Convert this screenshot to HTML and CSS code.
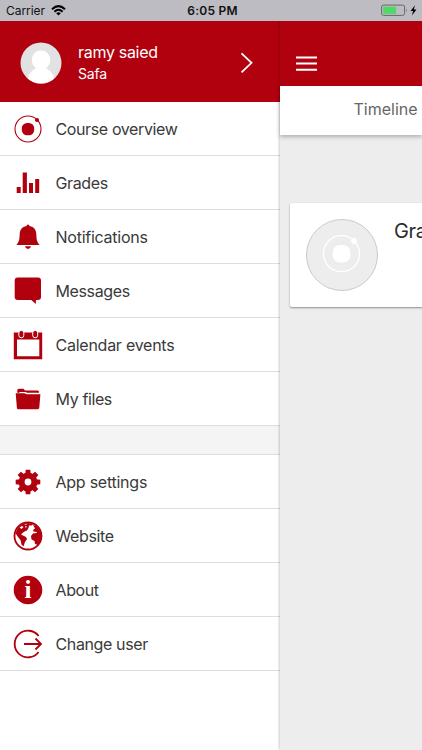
FILE: index.html
```html
<!DOCTYPE html>
<html lang="en">
<head>
<meta charset="utf-8">
<title>Menu</title>
<link rel="stylesheet" href="styles.css">
</head>
<body>
<div class="phone">
  <div class="status">
    <div class="carrier"><span>Carrier</span>
      <svg width="15" height="11" viewBox="0 0 15 11"><g fill="none" stroke="#000" stroke-width="2"><path d="M1 4.200Q7.500 -1.900 14 4.200"/><path d="M3.400 6.700Q7.500 2.800 11.600 6.700"/></g><path d="M5.200 8.300Q7.500 6.300 9.800 8.300L7.500 10.600Z"/></svg>
    </div>
    <div class="time">6:05 PM</div>
    <div class="power">
      <svg width="38" height="13" viewBox="0 0 38 13"><rect x=".6" y="1.100" width="23" height="10.300" rx="2" fill="none" stroke="#66666a" stroke-width="1"/><rect x="2.200" y="2.800" width="13" height="7" fill="#4cd964"/><path d="M25.200 4.500q1.500 1.700 0 3.500z" fill="#66666a"/><path d="M34 1.200L29.500 7H32.100L30.900 11.500L35.500 5.500H32.800Z"/></svg>
    </div>
  </div>
  <div class="content">
    <nav class="menu">
      <div class="profile">
        <svg class="avatar" width="42" height="42" viewBox="0 0 42 42"><defs><clipPath id="face"><circle cx="21" cy="21" r="20.500"/></clipPath></defs><g clip-path="url(#face)"><path fill="#e2e2e2" d="M0 0H42V42H0z"/><rect x="12" y="8.500" width="18" height="19" rx="8.500" fill="#fff"/><path fill="#fff" d="M7 42Q7 31 16 26H26Q35 31 35 42Z"/></g></svg>
        <div class="names"><div class="name">ramy saied</div><div class="site">Safa</div></div>
        <svg class="chevron" width="14" height="22" viewBox="0 0 14 22"><path d="M1.500 1.300L11.500 10.800L1.500 20.300" fill="none" stroke="#fff" stroke-width="1.800"/></svg>
      </div>
      <div class="row"><svg viewBox="0 0 30 30"><circle cx="15" cy="15" r="13" fill="none" stroke="#b1000e" stroke-width="1.100"/><rect x="8.800" y="8.900" width="12.400" height="12.400" rx="5.200"/><circle cx="24" cy="6" r="2.100"/></svg><span>Course overview</span></div>
      <div class="row"><svg viewBox="0 0 30 30"><path d="M3.700 19h4v6h-4zM9.700 4.500h4.200v20.500H9.700zM16 15h4v10h-4zM22.200 11h4v14h-4z"/></svg><span>Grades</span></div>
      <div class="row"><svg viewBox="0 0 30 30"><path d="M15 2.500q1.400 0 1.500 1.500C21 4.700 23.200 8 23.300 12C23.500 18 24 19.500 26.500 23H3.500C6 19.500 6.500 18 6.700 12C6.800 8 9 4.700 13.500 4Q13.600 2.500 15 2.500ZM12 24.300H18Q17.500 27 15 27T12 24.300Z"/></svg><span class="wide">Notifications</span></div>
      <div class="row"><svg viewBox="0 0 30 30"><path d="M5 1.500H25.300Q28.300 1.500 28.300 4.500V21Q28.300 24 25.300 24H23.200V28L18.500 24H5Q2 24 2 21V4.500Q2 1.500 5 1.500Z" transform="translate(-.3 0)"/></svg><span>Messages</span></div>
      <div class="row"><svg viewBox="0 0 30 30"><path fill-rule="evenodd" d="M.8 2.500H29.200V29.200H.8ZM4 9.500V26.200H26.300V9.500Z"/><g fill="#b1000e" stroke="#fff" stroke-width="1"><rect x="5.800" y=".4" width="5" height="7.400" rx="2.500"/><rect x="19.700" y=".4" width="5" height="7.400" rx="2.500"/></g></svg><span class="wide">Calendar events</span></div>
      <div class="row"><svg viewBox="0 0 30 30"><path d="M4.300 8.500V6.300Q4.300 4.700 5.800 4.700H10.500L12 6.500H24.600Q26 6.500 26 8V8.700H14L12.500 7.900H7L5.500 9ZM2.700 9.300H11.500L13.500 10.200H27.400L26.300 23.500Q26.100 25.200 24.700 25.200H5.300Q4 25.200 3.900 23.700Z"/></svg><span>My files</span></div>
      <div class="divider"></div>
      <div class="row"><svg viewBox="0 0 30 30"><circle cx="15" cy="15" r="6.400" fill="none" stroke="#b1000e" stroke-width="6"/><g><path id="tooth" d="M12.300 7L12.700 2.700H17.300L17.700 7Z"/><use href="#tooth" transform="rotate(45 15 15)"/><use href="#tooth" transform="rotate(90 15 15)"/><use href="#tooth" transform="rotate(135 15 15)"/><use href="#tooth" transform="rotate(180 15 15)"/><use href="#tooth" transform="rotate(225 15 15)"/><use href="#tooth" transform="rotate(270 15 15)"/><use href="#tooth" transform="rotate(315 15 15)"/></g></svg><span class="wide">App settings</span></div>
      <div class="row"><svg viewBox="0 0 30 30"><circle cx="15" cy="15" r="13.500" fill="#fff" stroke="#b1000e" stroke-width="1.800"/><path d="M2.500 12L5 6.500L10 3L15 2L20 3L18.500 4.500L16 4.500L15.500 7L14 9.500L11.500 10.500L9.500 12L8 13.500L10 14.500L13 16L14 18L12 21L10.500 25.500L8.500 23.500L7.500 19L5 16L3 13ZM20 4L24 5L28 11V19L25 24L22 23L21.500 20L18.500 18.500L18 15L20 12.500L23.500 12L24 11L20.500 10.500L20 9L22 7.500Z"/><path fill="#fff" d="M6.500 6.500L9 5L10.500 6L8.500 8ZM12 5L14 5.500L12.800 7ZM11 3.500L13 3L14 4Z"/></svg><span>Website</span></div>
      <div class="row"><svg viewBox="0 0 30 30"><circle cx="15" cy="15" r="14.300"/><text class="info" x="15" y="23.300" text-anchor="middle">i</text></svg><span>About</span></div>
      <div class="row"><svg viewBox="0 0 30 30"><g fill="none" stroke="#b1000e" stroke-width="1.800"><path d="M25.600 7A13.300 13.300 0 1 0 25.600 23"/><path d="M11 15H28M22.500 9.500L28 15L22.500 20.500"/></g></svg><span>Change user</span></div>
    </nav>
    <main class="page">
      <header class="bar"><svg width="21" height="16" viewBox="0 0 21 16"><path d="M0 1.500H21M0 7.500H21M0 13.700H21" stroke="#fff" stroke-width="1.900"/></svg></header>
      <div class="tabs"><span>Timeline</span></div>
      <section class="card">
        <svg width="72" height="72" viewBox="0 0 72 72"><circle cx="36" cy="36" r="35.500" fill="#ededed" stroke="#c4c4c4" stroke-width=".9"/><circle cx="35.500" cy="34.700" r="18" fill="none" stroke="#fff" stroke-width="1.300"/><rect x="26.800" y="26" width="17.500" height="17.500" rx="7" fill="#fff"/><circle cx="48" cy="22" r="2.900" fill="#fff"/></svg>
        <span class="course">Gra</span>
      </section>
    </main>
  </div>
</div>
</body>
</html>
```
FILE: styles.css
```css
* { box-sizing: border-box; }
body { margin: 0; font-family: Inter, "Liberation Sans", sans-serif; color: #3a3a3a; }
svg { display: block; flex: none; }
.phone { width: 422px; height: 750px; overflow: hidden; display: flex; flex-direction: column; background: #fff; }
.status { height: 21px; flex: none; background: #bdbcc3; color: #111; display: grid; grid-template-columns: 1fr auto 1fr; align-items: center; padding: 0 3px 0 6px; font-size: 12px; line-height: 21px; }
.carrier { display: flex; align-items: center; gap: 6px; letter-spacing: -.05px; }
.time { font-weight: 600; letter-spacing: .25px; }
.power { display: flex; justify-content: flex-end; }
.content { flex: 1; display: flex; min-height: 0; }
.menu { width: 280px; flex: none; background: #fff; }
.profile { height: 81px; background: #b1000e; display: flex; align-items: center; padding: 2px 26px 0 20px; color: #fff; }
.names { flex: 1; padding-left: 16px; }
.name { font-size: 16px; line-height: 22px; letter-spacing: -.3px; }
.site { font-size: 14px; line-height: 22px; letter-spacing: -.2px; }
.row { height: 54px; display: flex; align-items: center; gap: 13px; padding-left: 12.5px; border-bottom: 1px solid #dedede; font-size: 16px; letter-spacing: -.38px; }
.row svg { width: 30px; height: 30px; fill: #b1000e; }
.wide { letter-spacing: -.25px; }
.divider { height: 29px; background: #f4f4f4; border-bottom: 1px solid #dedede; }
.info { font-family: "Liberation Serif", serif; font-weight: bold; font-size: 25px; fill: #fff; letter-spacing: 0; }
.page { flex: 1; min-width: 0; background: #ededed; box-shadow: 0 0 3px rgba(0,0,0,.35); clip-path: inset(0 0 0 -5px); }
.bar { height: 65px; background: #b1000e; padding: 35px 0 0 16px; }
.tabs { height: 49px; background: #fff; box-shadow: 0 2px 4px rgba(0,0,0,.25); padding-left: 73.5px; line-height: 47px; font-size: 16px; color: #666; white-space: nowrap; }
.card { height: 104px; width: 200px; margin: 68px 0 0 10px; background: #fff; border-radius: 2px; box-shadow: 0 1px 2px rgba(0,0,0,.4); display: flex; padding: 16px; gap: 16px; }
.course { font-size: 20px; line-height: 24px; letter-spacing: -.4px; color: #2c2c2c; }
```
